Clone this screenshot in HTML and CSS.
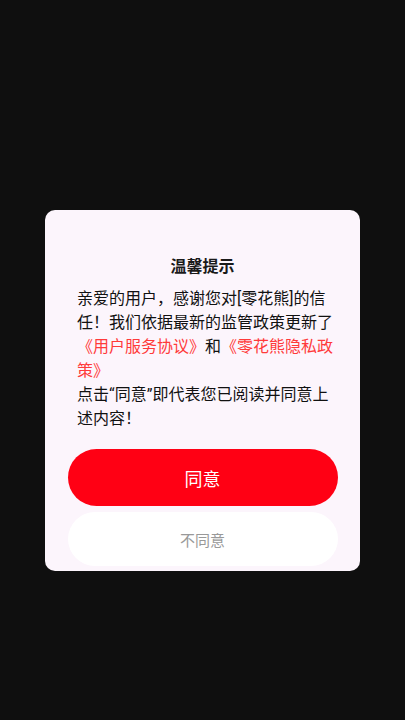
FILE: index.html
```html
<!DOCTYPE html>
<html lang="zh-CN">
<head>
    <meta charset="UTF-8">
    <meta name="viewport" content="width=device-width, initial-scale=1.0">
    <title>温馨提示</title>
    <link rel="stylesheet" href="styles.css">
</head>
<body>

    <div class="dialog">
        <h2 class="dialog-title">温馨提示</h2>
        <p class="dialog-text">
            亲爱的用户，感谢您对[零花熊]的信任！我们依据最新的监管政策更新了<a href="#" class="link">《用户服务协议》</a>和<a href="#" class="link">《零花熊隐私政策》</a><br>点击“同意”即代表您已阅读并同意上述内容！
        </p>
        <button class="btn btn-agree">同意</button>
        <button class="btn btn-disagree">不同意</button>
    </div>

</body>
</html>
```

FILE: styles.css
```css
body {
    font-family: Roboto, "Noto Sans CJK SC", sans-serif;
    margin: 0;
    padding: 210px 0 0;
    background-color: #0f0f0f;
    color: #111;
}

.dialog {
    width: 315px;
    margin: 0 auto;
    box-sizing: border-box;
    background-color: #fcf5fc;
    border-radius: 10px;
    padding: 45px 0 5px;
}

.dialog-title {
    margin: 0;
    font-size: 16px;
    font-weight: bold;
    line-height: 24px;
    text-align: center;
    color: #1a1a1a;
}

.dialog-text {
    margin: 8px 0 18px;
    padding: 0 26px 0 32px;
    font-size: 16px;
    line-height: 24px;
}

.link {
    color: #ff3a3a;
    text-decoration: none;
}

.btn {
    display: block;
    width: 270px;
    margin: 0 auto;
    border: none;
    border-radius: 30px;
    font-family: inherit;
    cursor: pointer;
}

.btn-agree {
    height: 57px;
    background-color: #ff0014;
    color: white;
    font-size: 18px;
}

.btn-disagree {
    height: 54px;
    margin-top: 6px;
    background-color: white;
    color: #999;
    font-size: 15px;
}
```
